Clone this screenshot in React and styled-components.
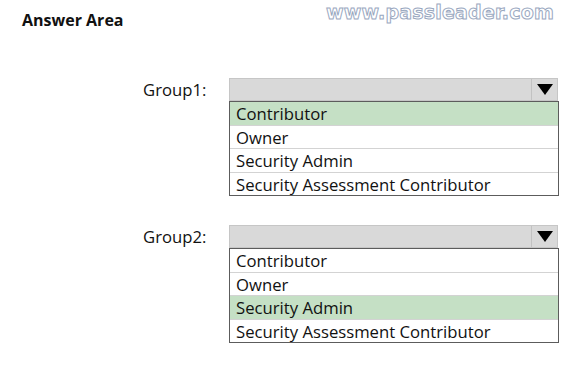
import React from "react";
import styled, { createGlobalStyle } from "styled-components";

const Global = createGlobalStyle`
  body {
    margin: 0;
    background: #ffffff;
    font-family: "Open Sans", "Noto Sans", sans-serif;
    color: #111;
  }
`;

const Page = styled.div`
  position: relative;
  width: 575px;
  height: 366px;
  box-sizing: border-box;
  padding: 10px 0 0 22px;
`;

const Watermark = styled.div`
  position: absolute;
  top: 1px;
  left: 326px;
  font-family: "DejaVu Sans", sans-serif;
  font-weight: bold;
  font-size: 19px;
  letter-spacing: 0.2px;
  color: #ffffff;
  -webkit-text-stroke: 1px #9aa8bf;
`;

const Title = styled.div`
  font-family: "Open Sans", sans-serif;
  font-weight: 700;
  font-size: 16px;
  line-height: 20px;
  color: #111;
`;

const Groups = styled.div`
  display: flex;
  flex-direction: column;
  gap: 29px;
  margin: 48px 0 0 121px;
`;

const Group = styled.div`
  display: flex;
  align-items: flex-start;
`;

const Label = styled.div`
  width: 86px;
  height: 23px;
  line-height: 24px;
  font-size: 16.7px;
`;

const Select = styled.div`
  width: 329px;
  display: flex;
  flex-direction: column;
`;

const Header = styled.div`
  height: 23px;
  box-sizing: border-box;
  border: 1px solid #c6c6c6;
  background: #d9d9d9;
  display: flex;
  justify-content: flex-end;
`;

const Arrow = styled.div`
  width: 25px;
  border-left: 1px solid #c2c2c2;
  display: flex;
  align-items: center;
  justify-content: center;
`;

const List = styled.div`
  border: 1px solid #5c5c5c;
  border-top: none;
  margin-right: -1px;
  display: flex;
  flex-direction: column;
`;

const Option = styled.div`
  height: 23.5px;
  box-sizing: border-box;
  padding-left: 6px;
  line-height: 23px;
  font-size: 16.7px;
  background: ${({ $selected }) => ($selected ? "#c5e0c5" : "#ffffff")};
  border-top: 1px solid #d3d3d3;
  &:first-child {
    border-top: 1px solid #5c5c5c;
  }
`;

const options = ["Contributor", "Owner", "Security Admin", "Security Assessment Contributor"];

const groups = [
  { name: "Group1:", selected: "Contributor" },
  { name: "Group2:", selected: "Security Admin" },
];

const Triangle = () => (
  <svg width="16" height="11" viewBox="0 0 16 11">
    <polygon points="0,0 16,0 8,11" fill="#000" />
  </svg>
);

export default function App() {
  return (
    <Page>
      <Global />
      <Watermark>www.passleader.com</Watermark>
      <Title>Answer Area</Title>
      <Groups>
        {groups.map((g) => (
          <Group key={g.name}>
            <Label>{g.name}</Label>
            <Select>
              <Header>
                <Arrow>
                  <Triangle />
                </Arrow>
              </Header>
              <List>
                {options.map((o) => (
                  <Option key={o} $selected={o === g.selected}>
                    {o}
                  </Option>
                ))}
              </List>
            </Select>
          </Group>
        ))}
      </Groups>
    </Page>
  );
}
